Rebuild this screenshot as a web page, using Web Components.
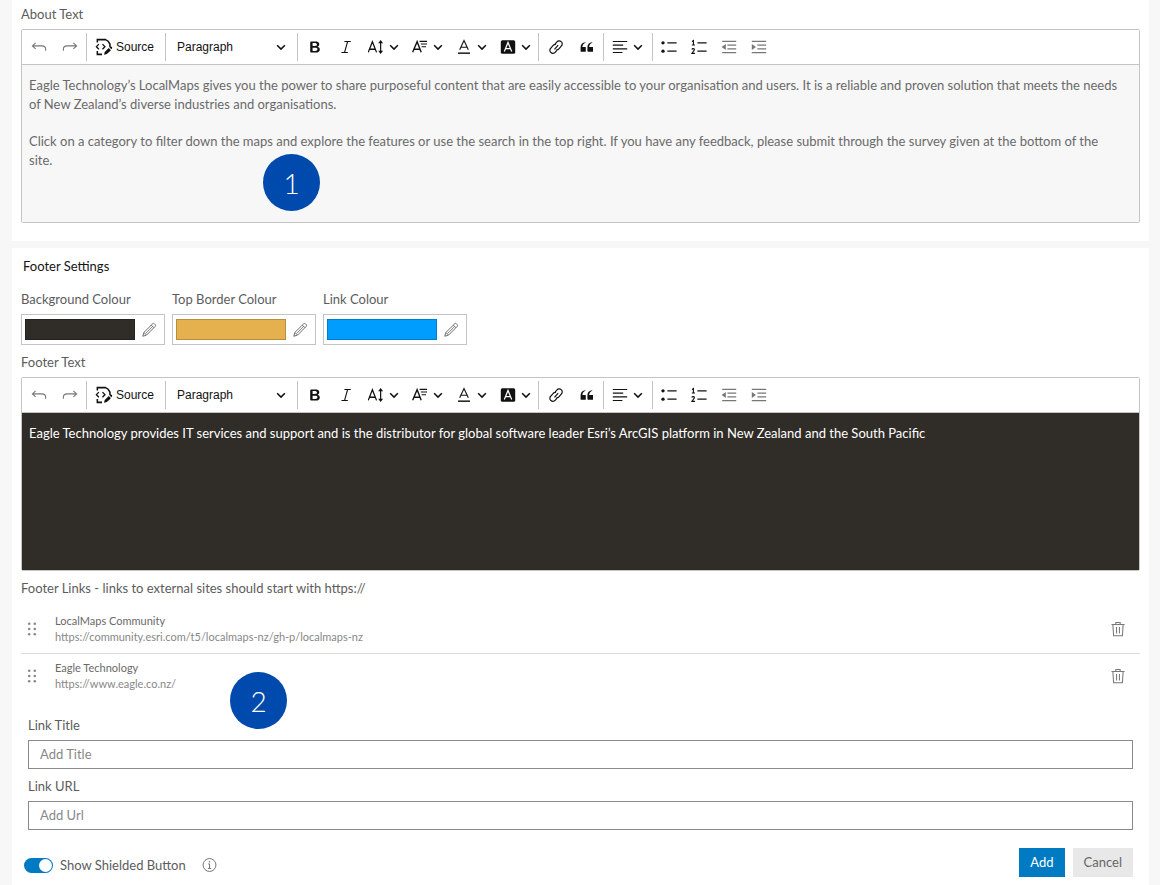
<!DOCTYPE html>
<html lang="en">
<head>
<meta charset="utf-8">
<meta name="viewport" content="width=device-width, initial-scale=1">
<title>Footer Settings</title>
<style>
  body { margin: 0; background: #f7f7f7; color: #5c5c5c; font: 13px/18px Lato, "Open Sans", sans-serif; }
</style>
</head>
<body>
<settings-page></settings-page>

<script>
const ICONS = {
  undo: '<path d="M5.800 4.800 1.800 8.600l4 3.800M2.200 8.600h11.300q4.800 0 4.800 4.200v2" stroke-width="1.400"/>',
  redo: '<path d="m14.200 4.800 4 3.800-4 3.800M17.800 8.600H6.500q-4.800 0-4.800 4.200v2" stroke-width="1.400"/>',
  source: '<path d="M2.600 5V1.800h9.200q3.200 1.200 4.800 5v3.200M2.600 14.500v3.700h5.200" stroke-width="1.700"/><path d="M4.300 6.800 1.600 9.600l2.700 2.800M8.300 6.800l2.700 2.800-2.700 2.800" stroke-width="1.500"/><path d="m10 18.700.8-3.200 4.500-4.300 2.400 2.400-4.500 4.300zM16.100 10.400l1.200-1q.9-.2 1.500.6.6.8.100 1.600l-.8.900z" fill="currentColor" stroke="none"/>',
  bold: '<path d="M10.187 17H5.773c-.637 0-1.092-.138-1.364-.415-.273-.277-.409-.718-.409-1.323V4.738c0-.617.140-1.062.419-1.332.279-.27.730-.406 1.354-.406h4.680c.690 0 1.288.041 1.793.124.506.083.960.242 1.360.477.341.197.644.447.906.750a3.262 3.262 0 0 1 .808 2.162c0 1.401-.722 2.426-2.167 3.075C15.050 10.175 16 11.315 16 13.010a3.756 3.756 0 0 1-2.296 3.504 6.100 6.100 0 0 1-1.517.377c-.571.073-1.238.110-2 .110zm-.217-6.217H7v4.087h3.069c1.977 0 2.965-.690 2.965-2.072 0-.707-.256-1.220-.768-1.537-.512-.319-1.277-.478-2.296-.478zM7 5.130v3.619h2.606c.729 0 1.292-.067 1.690-.200a1.600 1.600 0 0 0 .910-.765c.165-.267.247-.566.247-.897 0-.707-.260-1.176-.778-1.409-.519-.232-1.310-.348-2.375-.348H7z" fill="currentColor" fill-rule="evenodd" stroke="none"/>',
  italic: '<path d="M8 3.200h8M4.300 16.800h8M12 3.200 8.200 16.800" stroke-width="1.400"/>',
  size: '<path d="M.3 16.700 5.500 3.500l5.200 13.200M2 12.800h7" stroke-width="1.600"/><path d="M15.800 4v12" stroke-width="1.500"/><path d="M15.800 1.300 18.900 5.300h-6.200zM15.800 18.700l3.100-4h-6.200z" fill="currentColor" stroke="none"/>',
  family: '<path d="M.8 16.700 6.400 3.300l5.100 13.400M2.800 12.800h7" stroke-width="1.700"/><path d="M9.500 2.900h9.300M11 6.300h7.800M12 9.700h5.500" stroke-width="1.400"/>',
  colour: '<path d="M4.600 13.500 10 2l5.400 11.500M6.400 10.300h7.200" stroke-width="1.400"/><path d="M2.500 17.700h15" stroke-width="1.800"/>',
  highlight: '<rect x="1" y="1.500" width="18" height="17" rx="2" fill="currentColor" stroke="none"/><path d="M5.400 15.500 10 4.300l4.600 11.200M7 12h6" stroke="#fff" stroke-width="1.500"/>',
  link: '<path d="m8.100 12.900 4.600-5.300M8.800 6.300l2.400-2.700a3.700 3.700 0 0 1 5.300-.3 3.700 3.700 0 0 1 .3 5.300l-3.200 3.700a3.700 3.700 0 0 1-3.300 1.200M11 14.200l-2.100 2.400a3.700 3.700 0 0 1-5.300.3 3.700 3.700 0 0 1-.3-5.300l3.200-3.700a3.700 3.700 0 0 1 3.500-1.200" stroke-width="1.500"/>',
  quote: '<path d="M2 10.423a6.500 6.500 0 0 1 6.056-6.408l.038.670C5.448 5.423 4.354 7.663 4.220 10H8c.552 0 .500.432.500.986v4.511c0 .554-.448.503-1 .503h-5c-.552 0-.500-.449-.500-1.003v-4.574zm8.500 0a6.500 6.500 0 0 1 6.056-6.408l.038.670c-2.646.739-3.740 2.979-3.873 5.315H17c.552 0 .500.432.500.986v4.511c0 .554-.448.503-1 .503h-5c-.552 0-1-.449-1-1.003v-4.574z" fill="currentColor" stroke="none"/>',
  align: '<path d="M1 3.100h18M1 7.700h13M1 12.300h18M1 16.900h12" stroke-width="1.500"/>',
  bullets: '<path d="M8 4.800h11.500M8 15.200h11.500" stroke-width="1.600"/><circle cx="2.500" cy="4.800" r="2.100" fill="currentColor" stroke="none"/><circle cx="2.500" cy="15.200" r="2.100" fill="currentColor" stroke="none"/>',
  numbers: '<path d="M8 4.800h11.500M8 15.200h11.500" stroke-width="1.600"/><path d="M1.300 3 3 2v5.500M1 7.500h4M1 13.200q.5-1.300 1.900-1.200 1.700.3 1.200 1.900L1.200 18h3.800" stroke-width="1.400"/>',
  outdent: '<path d="M1.500 3h17.500M8 7.700h11M8 12.300h11M1.500 17h17.500" stroke-width="1.500"/><path d="M6 6.300v7.400L.8 10z" fill="currentColor" stroke="none"/>',
  indent: '<path d="M1 3h18M8 7.700h11M8 12.300h11M1 17h18" stroke-width="1.500"/><path d="M1 6.300v7.400L6.200 10z" fill="currentColor" stroke="none"/>',
  chevron: '<path d="m4.500 7.500 5.500 5.500L15.500 7.500" stroke-width="2.200"/>',
  pencil: '<path d="m2.200 17.800 1.400-4.700L14.600 2.200q1.100-.9 2.200.1l.9.900q1 1.100.1 2.200L6.900 16.400zM12.900 3.900l3.200 3.200" stroke-width="1.200"/><path d="m3.700 13.100 3.100 3.200M5.600 14.500 14.500 5.600" stroke-width="1"/>',
  trash: '<path d="M1.800 4.500h16.400M7.300 4.300V1.800h5.400v2.500M3.600 4.600l.9 13.900h11L16.400 4.600M8.200 7.500v8M11.800 7.500v8" stroke-width="1.300"/>',
  grip: '<g fill="currentColor" stroke="none"><circle cx="6.500" cy="3.500" r="1.600"/><circle cx="13.500" cy="3.500" r="1.600"/><circle cx="6.500" cy="10" r="1.600"/><circle cx="13.500" cy="10" r="1.600"/><circle cx="6.500" cy="16.500" r="1.600"/><circle cx="13.500" cy="16.500" r="1.600"/></g>',
  info: '<circle cx="10" cy="10" r="8.600" stroke-width="1.200"/><path d="M8.200 8.500H10v6M7.800 14.600h4.400" stroke-width="1.200"/><circle cx="10" cy="5.700" r="1" fill="currentColor" stroke="none"/>'
};

/* Registers an element whose shadow root is filled by render(element). */
function define(tag, render) {
  customElements.define(tag, class extends HTMLElement {
    connectedCallback() {
      if (this.shadowRoot) return;
      this.attachShadow({ mode: 'open' }).innerHTML = render(this);
    }
  });
}
const attr = (el, name) => el.getAttribute(name) || '';

define('ui-icon', el => `
  <style>
    :host { display: block; width: 16px; height: 16px; flex: none; }
    svg { display: block; width: 100%; height: 100%; fill: none; stroke: currentColor; }
  </style>
  <svg viewBox="0 0 20 20" aria-hidden="true">${ICONS[attr(el, 'name')]}</svg>`);

define('tool-button', el => `
  <style>
    :host { display: block; flex: none; }
    button { display: flex; align-items: center; justify-content: center; gap: 3px; box-sizing: border-box; width: 29px; height: 30px;
      padding: 0; border: 0; background: none; color: #111; font: 12px/18px "Liberation Sans", Arial, sans-serif; }
    :host([narrow]) button { width: 28px; }
    :host([menu]) button { width: 42px; justify-content: flex-start; padding-left: 6px; }
    :host([wide]) button { width: 44px; }
    :host([text]) button { width: 74px; justify-content: flex-start; padding-left: 6px; }
    :host([text]) .main { width: 18px; height: 20px; }
    .arrow { width: 14px; height: 14px; }
    button:disabled { color: #777; }
  </style>
  <button type="button" aria-label="${attr(el, 'label')}" ${el.hasAttribute('off') ? 'disabled' : ''}>
    <ui-icon class="main" name="${attr(el, 'icon')}"></ui-icon>${attr(el, 'text')}
    ${el.hasAttribute('menu') ? '<ui-icon class="arrow" name="chevron"></ui-icon>' : ''}
  </button>`);

define('editor-toolbar', () => `
  <style>
    :host { display: flex; flex-wrap: wrap; align-items: center; gap: 2px; min-height: 34px; padding: 0 2px;
      background: #fff; border-bottom: 1px solid #c4c4c4; }
    i { width: 1px; height: 28px; background: #c4c4c4; }
    .style { display: grid; align-items: center; width: 127px; }
    .style > * { grid-area: 1 / 1; }
    select { appearance: none; width: 100%; height: 30px; padding: 0 9px; border: 0; background: none; color: #111;
      font: 12px/18px "Liberation Sans", Arial, sans-serif; }
    .style ui-icon { width: 14px; height: 14px; margin-right: 7px; justify-self: end; pointer-events: none; color: #111; }
  </style>
  <tool-button icon="undo" label="Undo" off></tool-button>
  <tool-button icon="redo" label="Redo" off></tool-button>
  <i></i>
  <tool-button icon="source" label="Source" text="Source"></tool-button>
  <i></i>
  <span class="style">
    <select aria-label="Heading"><option>Paragraph</option></select>
    <ui-icon name="chevron"></ui-icon>
  </span>
  <i></i>
  <tool-button icon="bold" label="Bold"></tool-button>
  <tool-button icon="italic" label="Italic"></tool-button>
  <tool-button icon="size" label="Font size" menu></tool-button>
  <tool-button icon="family" label="Font family" menu></tool-button>
  <tool-button icon="colour" label="Font colour" menu></tool-button>
  <tool-button icon="highlight" label="Font background colour" menu></tool-button>
  <i></i>
  <tool-button icon="link" label="Link"></tool-button>
  <tool-button icon="quote" label="Block quote"></tool-button>
  <i></i>
  <tool-button icon="align" label="Text alignment" menu wide></tool-button>
  <i></i>
  <tool-button icon="bullets" label="Bulleted list" narrow></tool-button>
  <tool-button icon="numbers" label="Numbered list" narrow></tool-button>
  <tool-button icon="outdent" label="Decrease indent" off narrow></tool-button>
  <tool-button icon="indent" label="Increase indent" off narrow></tool-button>`);

define('rich-editor', el => `
  <style>
    :host { display: flex; flex-direction: column; gap: 6px; }
    .frame { border: 1px solid #c4c4c4; border-radius: 2px; }
    .content { box-sizing: border-box; min-height: 157px; padding: 11px 16px 0 7px; line-height: 19px;
      background: var(--editor-background, #f7f7f7); color: var(--editor-colour, #6a6a6a); outline: none; }
    ::slotted(p) { margin: 0 0 18px; }
  </style>
  <span id="label">${attr(el, 'label')}</span>
  <div class="frame">
    <editor-toolbar role="toolbar"></editor-toolbar>
    <div class="content" contenteditable="true" role="textbox" aria-multiline="true" aria-labelledby="label" spellcheck="false"><slot></slot></div>
  </div>`);

define('settings-panel', () => `
  <style>
    :host { display: block; position: relative; box-sizing: border-box; padding: 5px 9px 18px; background: #fff; }
  </style>
  <slot></slot>`);

define('colour-field', el => `
  <style>
    :host { display: flex; flex-direction: column; gap: 6px; width: 144px; }
    .box { display: flex; align-items: center; gap: 6px; box-sizing: border-box; height: 31px; padding: 0 7px 0 3px; border: 1px solid #c4c4c4; }
    input { appearance: none; flex: 1; min-width: 0; height: 21px; padding: 0; border: 0; background: none; }
    input::-webkit-color-swatch-wrapper { padding: 0; }
    input::-webkit-color-swatch { border: 1px solid #0003; border-radius: 0; }
    button { padding: 0; border: 0; background: none; color: #666; }
  </style>
  <label for="value">${attr(el, 'label')}</label>
  <div class="box">
    <input id="value" type="color" value="${attr(el, 'value')}">
    <button type="button" aria-label="Edit ${attr(el, 'label')}"><ui-icon name="pencil"></ui-icon></button>
  </div>`);

define('footer-link', el => `
  <style>
    :host { display: flex; align-items: center; gap: 15px; padding: 6px 14px 8px 3px; }
    :host(:not(:last-of-type)) { border-bottom: 1px solid #dcdcdc; }
    .text { flex: 1; min-width: 0; font-size: 11px; line-height: 16px; }
    .name { color: #6a6a6a; }
    .url { color: #888; }
    .grip { color: #888; }
    button { padding: 0; border: 0; background: none; color: #777; }
  </style>
  <ui-icon class="grip" name="grip"></ui-icon>
  <div class="text">
    <div class="name"><slot></slot></div>
    <div class="url">${attr(el, 'url')}</div>
  </div>
  <button type="button" aria-label="Delete link"><ui-icon name="trash"></ui-icon></button>`);

define('text-field', el => `
  <style>
    :host { display: flex; flex-direction: column; gap: 6px; }
    input { box-sizing: border-box; width: 100%; height: 29px; padding: 0 11px 2px; border: 1px solid #8a8a8a; border-radius: 0;
      background: #fff; color: #555; font: inherit; }
    input::placeholder { color: #888; opacity: 1; }
  </style>
  <label for="value">${attr(el, 'label')}</label>
  <input id="value" type="text" placeholder="${attr(el, 'placeholder')}">`);

define('toggle-switch', () => `
  <style>
    :host { display: flex; align-items: center; gap: 7px; }
    input { appearance: none; display: flex; align-items: center; box-sizing: border-box; width: 29px; height: 15px;
      margin: 0; padding: 1px; border-radius: 8px; background: #999; }
    input::before { content: ""; box-sizing: border-box; width: 13px; height: 13px; border-radius: 50%; background: #fff; }
    input:checked { justify-content: flex-end; background: #007ac2; }
  </style>
  <input id="value" type="checkbox" role="switch" checked>
  <label for="value"><slot></slot></label>`);

define('action-button', () => `
  <style>
    :host { display: block; }
    button { height: 29px; padding: 0 11px 2px; border: 0; background: #e8e8e8; color: #666; font: inherit; }
    :host([primary]) button { background: #007ac2; color: #fff; }
  </style>
  <button type="button"><slot></slot></button>`);

define('step-badge', () => `
  <style>
    :host { position: absolute; display: grid; place-items: center; width: 57px; height: 57px; border-radius: 50%;
      background: #004aad; color: #fff; font-size: 28px; line-height: 34px; font-weight: 300; }
  </style>
  <slot></slot>`);

define('settings-page', () => `
  <style>
    :host { display: flex; flex-direction: column; gap: 7px; box-sizing: border-box; min-height: 100vh; padding: 0 11px 0 12px; }
    .footer { flex: 1; display: flex; flex-direction: column; gap: 8px; padding: 9px 9px 8px; }
    h2 { margin: 0 2px 7px; font-size: inherit; font-weight: 400; color: #151515; }
    .colours { display: flex; flex-wrap: wrap; gap: 7px; }
    .dark { --editor-background: #302d28; --editor-colour: #fff; }
    .links { margin-top: 2px; }
    .form { display: flex; flex-direction: column; gap: 8px; padding: 8px 7px 0; }
    .actions { display: flex; align-items: flex-end; gap: 8px; margin-top: 10px; }
    toggle-switch { height: 24px; margin-left: -4px; }
    .info { width: 15px; height: 24px; margin: 0 auto 0 8px; color: #666; }
    .first { left: 251px; top: 154px; }
    .second { left: 218px; top: 424px; }
  </style>
  <settings-panel>
    <rich-editor label="About Text">
      <p>Eagle Technology’s LocalMaps gives you the power to share purposeful content that are easily accessible to your organisation and users. It is a reliable and proven solution that meets the needs of New Zealand’s diverse industries and organisations.</p>
      <p>Click on a category to filter down the maps and explore the features or use the search in the top right. If you have any feedback, please submit through the survey given at the bottom of the site.</p>
    </rich-editor>
    <step-badge class="first">1</step-badge>
  </settings-panel>
  <settings-panel class="footer">
    <h2>Footer Settings</h2>
    <div class="colours">
      <colour-field label="Background Colour" value="#302d28"></colour-field>
      <colour-field label="Top Border Colour" value="#e5b14e"></colour-field>
      <colour-field label="Link Colour" value="#009dff"></colour-field>
    </div>
    <rich-editor class="dark" label="Footer Text">
      <p>Eagle Technology provides IT services and support and is the distributor for global software leader Esri’s ArcGIS platform in New Zealand and the South Pacific</p>
    </rich-editor>
    <div>Footer Links - links to external sites should start with https://</div>
    <div class="links">
      <footer-link url="https://community.esri.com/t5/localmaps-nz/gh-p/localmaps-nz">LocalMaps Community</footer-link>
      <footer-link url="https://www.eagle.co.nz/">Eagle Technology</footer-link>
    </div>
    <div class="form">
      <text-field label="Link Title" placeholder="Add Title"></text-field>
      <text-field label="Link URL" placeholder="Add Url"></text-field>
      <div class="actions">
        <toggle-switch>Show Shielded Button</toggle-switch>
        <ui-icon class="info" name="info"></ui-icon>
        <action-button primary>Add</action-button>
        <action-button>Cancel</action-button>
      </div>
    </div>
    <step-badge class="second">2</step-badge>
  </settings-panel>`);
</script>
</body>
</html>
